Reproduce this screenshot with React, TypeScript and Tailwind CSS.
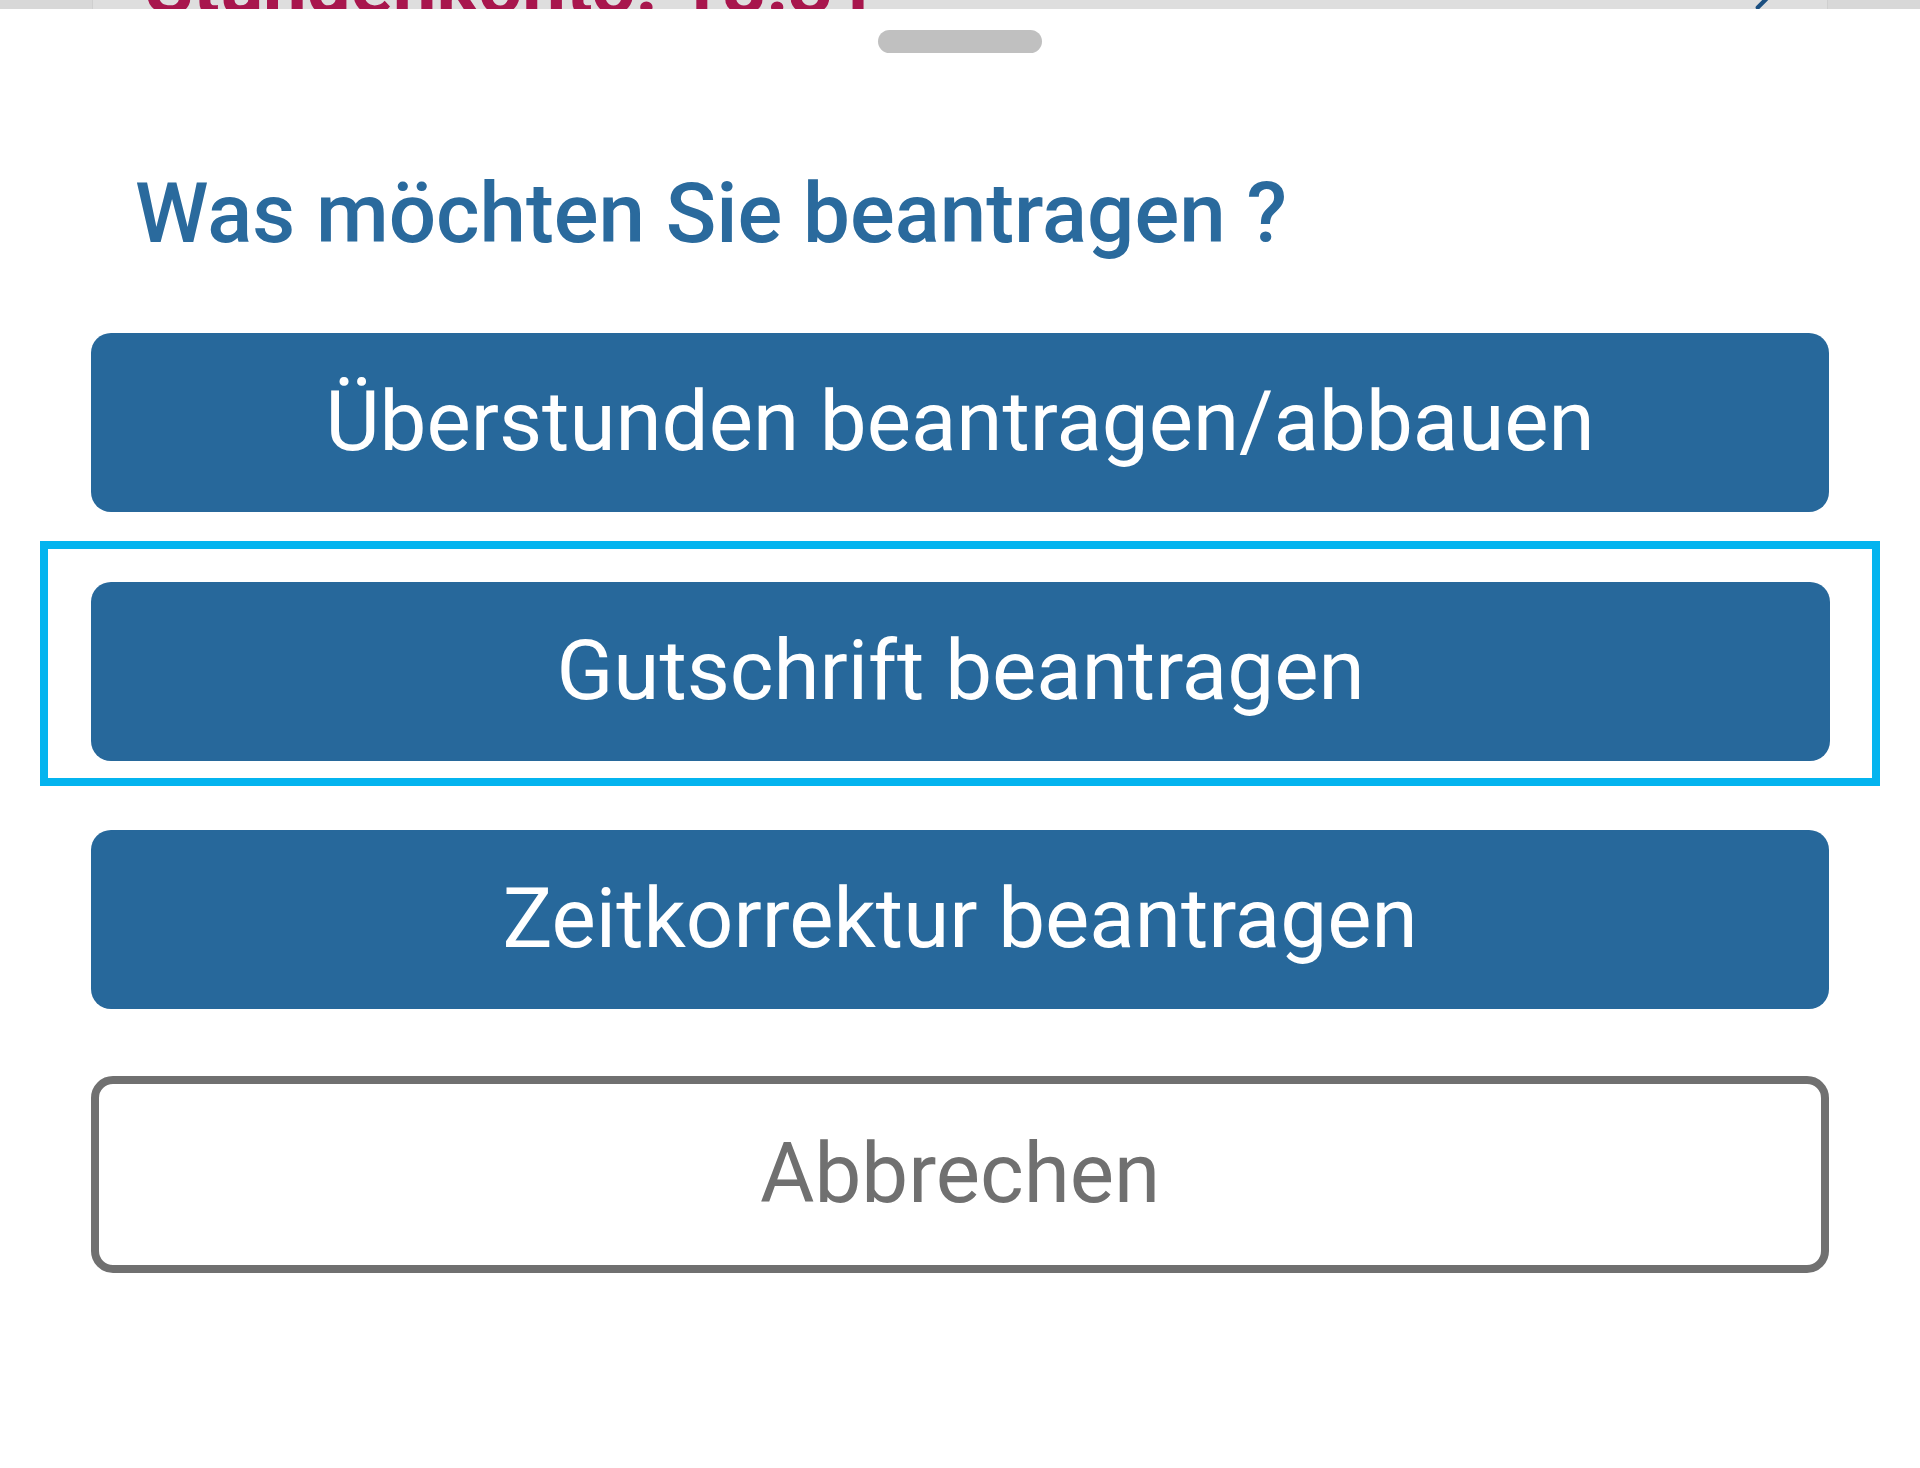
import { ChevronRight } from "lucide-react";

type Action = {
  label: string;
  focused?: boolean;
};

const actions: Action[] = [
  { label: "Überstunden beantragen/abbauen" },
  { label: "Gutschrift beantragen", focused: true },
  { label: "Zeitkorrektur beantragen" },
];

function ActionButton({ label }: { label: string }) {
  return (
    <button
      type="button"
      className="flex h-[179px] w-full items-center justify-center rounded-[20px] bg-[#27689b] text-[83.5px] leading-none text-white"
    >
      {label}
    </button>
  );
}

export default function App() {
  return (
    <div className="min-h-[1468px] bg-white font-['Roboto','Noto_Sans',sans-serif]">
      {/* page behind the sheet, only its bottom edge shows */}
      <div className="h-[9px] overflow-hidden bg-[#d8d8d8]">
        <div className="mx-[92px] flex h-full items-start justify-between border-x border-[#cfcfcf] bg-[#dedede] pl-[52px] pr-[48px]">
          <span className="-mt-[52px] text-[78px] font-bold leading-none text-[#a8164d]">
            Stundenkonto: 18:31
          </span>
          <ChevronRight className="-mt-[18px] h-[34px] w-[34px] text-[#1b4f80]" strokeWidth={3} />
        </div>
      </div>

      <div className="flex flex-col">
        <div className="mx-auto mt-[21px] h-[23px] w-[164px] rounded-full bg-[#c0c0c0]" />

        <h2 className="mt-[119px] pl-[135px] text-[83.5px] font-medium leading-none text-[#2a6a9d]">
          Was möchten Sie beantragen ?
        </h2>

        <div className="mt-[77px] flex flex-col">
          {actions.map((action, i) =>
            action.focused ? (
              <div
                key={action.label}
                className="mx-[40px] mt-[29px] border-[8px] border-[#04b4ef] pb-[17px] pl-[43px] pr-[42px] pt-[33px]"
              >
                <ActionButton label={action.label} />
              </div>
            ) : (
              <div key={action.label} className={i === 0 ? "px-[91px]" : "mt-[44px] px-[91px]"}>
                <ActionButton label={action.label} />
              </div>
            )
          )}
        </div>

        <div className="mt-[67px] px-[91px]">
          <button
            type="button"
            className="flex h-[197px] w-full items-center justify-center rounded-[22px] border-[8px] border-[#707070] bg-white text-[83.5px] leading-none text-[#707070]"
          >
            Abbrechen
          </button>
        </div>
      </div>
    </div>
  );
}
